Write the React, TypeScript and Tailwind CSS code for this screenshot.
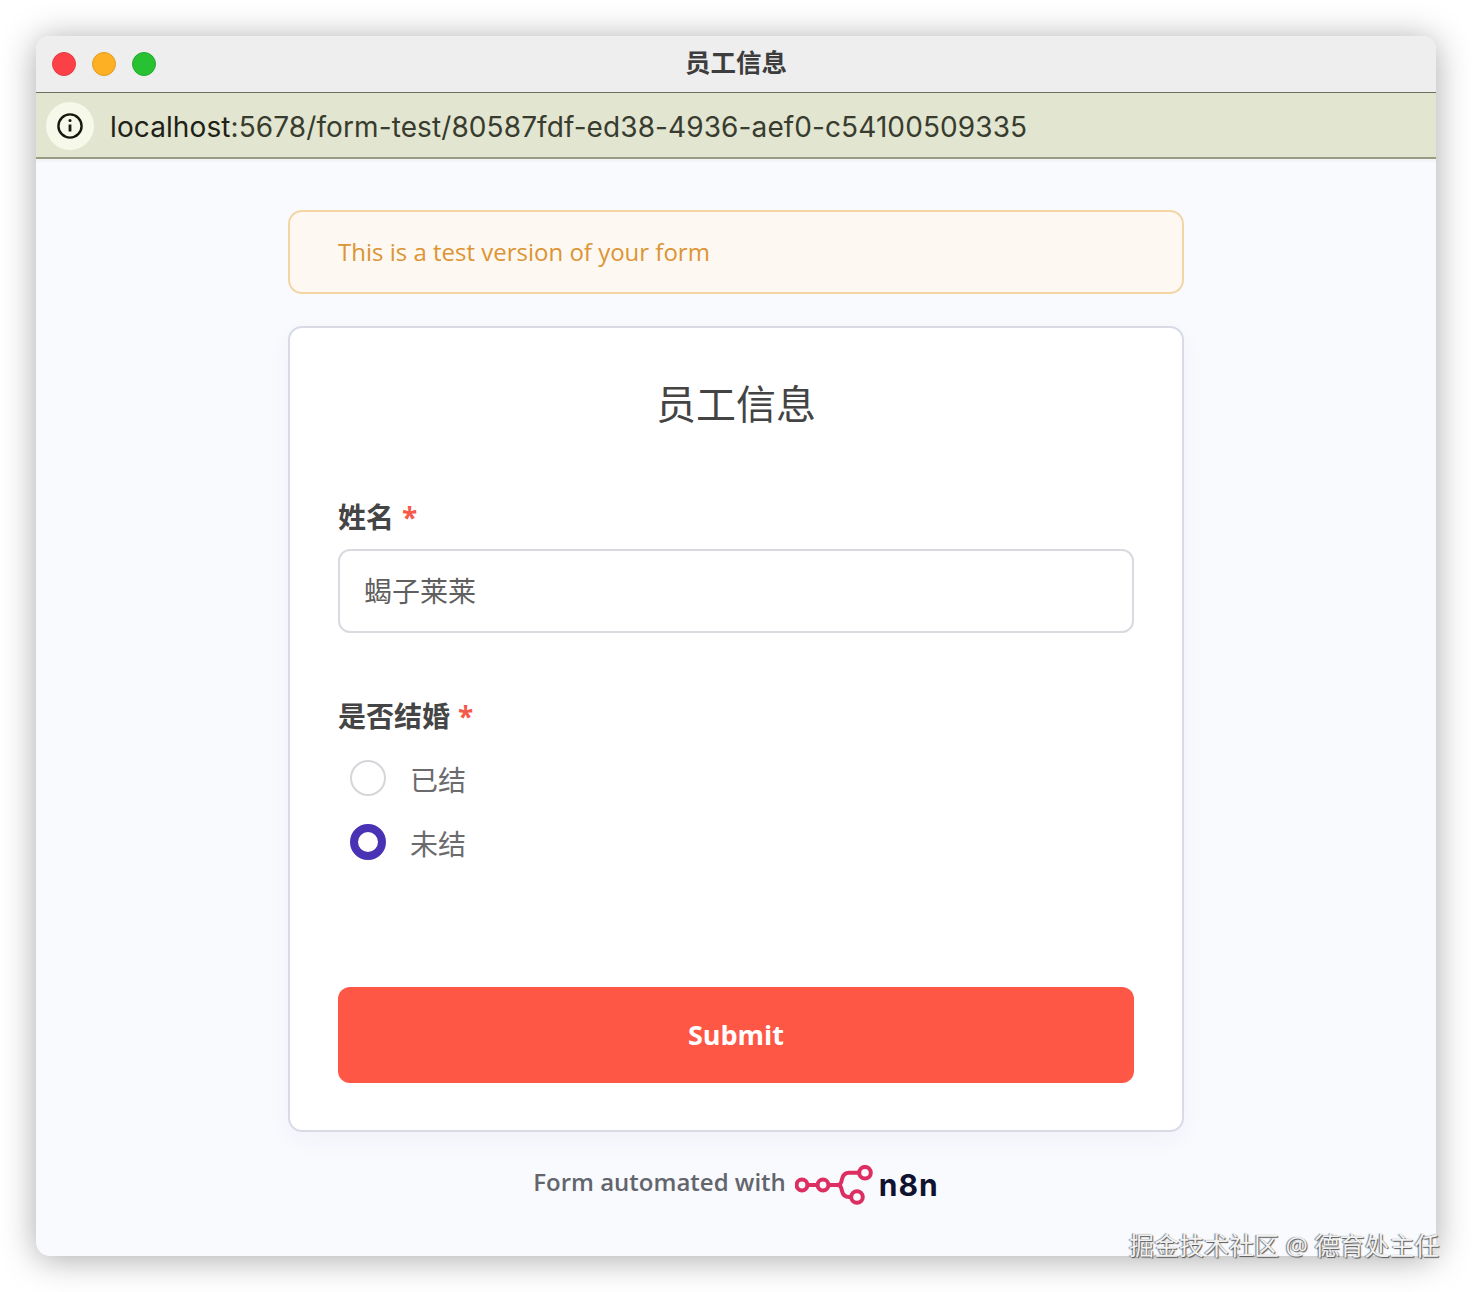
import React from "react";

const sans = "font-['Open_Sans','Noto_Sans_CJK_SC',sans-serif]";

function Logo() {
  return (
    <svg width="78" height="40" viewBox="0 0 78 40" fill="none" stroke="#dd2e62" strokeWidth="4" className="ml-[9px] mr-[6px]">
      <circle cx="7" cy="20" r="5.4" />
      <circle cx="28" cy="20" r="5.4" />
      <circle cx="70" cy="7.7" r="5.8" />
      <circle cx="62" cy="32" r="5.8" />
      <path d="M12 20h11M33 20h9c4 0 4-2 5-6 1-4.500 3-6.300 7-6.300h10M42 20c4 0 4 2 5 6 1 4.500 3 6 7 6h2.500" />
    </svg>
  );
}

export default function App() {
  return (
    <div className={`relative h-[1292px] w-[1472px] bg-white p-[36px] ${sans}`}>
      <div className="flex h-[1220px] w-[1400px] flex-col overflow-hidden rounded-[14px] bg-[#f9fafe] shadow-[0_3px_34px_rgba(0,0,0,0.34)]">
        <div className="relative flex h-[57px] items-center justify-center border-b border-[#6f705f] bg-[#eeeeee] pb-[2px]">
          <div className="absolute left-[16px] top-[16px] flex gap-[16px]">
            <span className="h-[24px] w-[24px] rounded-full border border-[#e23c42] bg-[#fd4048]" />
            <span className="h-[24px] w-[24px] rounded-full border border-[#e39a20] bg-[#feb024]" />
            <span className="h-[24px] w-[24px] rounded-full border border-[#25a82c] bg-[#28c132]" />
          </div>
          <span className="text-[25.500px] leading-none font-bold text-[#3d3d3d]">员工信息</span>
        </div>
        <div className="flex h-[66px] items-center border-b-[2px] border-[#989b84] bg-[#e2e5d0] pl-[10px] pt-[2px]">
          <div className="flex h-[48px] w-[48px] items-center justify-center rounded-full bg-[#f6f8ea]">
            <svg width="26" height="26" viewBox="0 0 26 26" fill="none" stroke="#16180f" strokeWidth="2.4">
              <circle cx="13" cy="13" r="11.6" />
              <path d="M13 11.500v7" strokeWidth="2.800" />
              <circle cx="13" cy="7.600" r="1.500" fill="#16180f" stroke="none" />
            </svg>
          </div>
          <span className="ml-[16px] pt-[1px] font-['Inter',sans-serif] text-[28px] leading-none tracking-[0.1px] text-[#1e2117]">
            localhost<span className="text-[#383c2f]">:5678/form-test/80587fdf-ed38-4936-aef0-c54100509335</span>
          </span>
        </div>
        <div className="h-[3px] bg-[#f3f4f6]" />
        <div className="flex flex-1 flex-col items-center pt-[48px]">
          <div className="flex h-[84px] w-[896px] items-center rounded-[14px] border-[2px] border-[#f3d6a6] bg-[#fdf8f2] px-[48px] text-[24px] text-[#dc9434]">
            This is a test version of your form
          </div>
          <div className="mt-[32px] flex h-[806px] w-[896px] flex-col rounded-[14px] border-[2px] border-[#d8dae6] bg-white px-[48px] shadow-[0_8px_24px_rgba(40,50,110,0.04)]">
            <h1 className="mt-[49px] h-[54px] text-center text-[40px] leading-[54px] text-[#444444]">员工信息</h1>
            <div className="mt-[66px] flex h-[40px] items-center text-[28px] font-bold leading-none text-[#454545]">
              姓名<span className="ml-[8px] text-[#f65a4a]">*</span>
            </div>
            <div className="mt-[12px] flex h-[84px] items-center rounded-[12px] border-[2px] border-[#d9dae0] bg-white px-[24px] text-[28px] text-[#5f5f5f]">
              蝎子莱莱
            </div>
            <div className="mt-[63px] flex h-[40px] items-center text-[28px] font-bold leading-none text-[#454545]">
              是否结婚<span className="ml-[8px] text-[#f65a4a]">*</span>
            </div>
            <div className="mt-[22px] flex h-[40px] items-center pl-[12px]">
              <span className="h-[36px] w-[36px] rounded-full border-[2px] border-[#d5d6d9] bg-white" />
              <span className="ml-[24px] pt-[4px] text-[28px] leading-none text-[#6b6b6e]">已结</span>
            </div>
            <div className="mt-[24px] flex h-[40px] items-center pl-[12px]">
              <span className="h-[36px] w-[36px] rounded-full border-[8px] border-[#4a32b4] bg-white" />
              <span className="ml-[24px] pt-[4px] text-[28px] leading-none text-[#6b6b6e]">未结</span>
            </div>
            <button className="mt-[125px] flex h-[96px] items-center justify-center rounded-[12px] bg-[#ff5746] text-[27px] font-bold text-white">
              Submit
            </button>
          </div>
          <div className="mt-[31px] flex h-[44px] items-center">
            <span className="pb-[7px] text-[24px] font-semibold text-[#63656c]">Form automated with</span>
            <Logo />
            <span className="font-['Inter',sans-serif] text-[30px] font-bold tracking-[1px] text-[#101330]">n8n</span>
          </div>
        </div>
      </div>
      <div className="absolute left-[1129px] top-[1229px] whitespace-nowrap text-[25px] leading-[32px] text-[#f1f1f1] [text-shadow:1px_1px_1px_#555,-1px_0_1px_#777]">
        掘金技术社区 @ 德育处主任
      </div>
    </div>
  );
}
